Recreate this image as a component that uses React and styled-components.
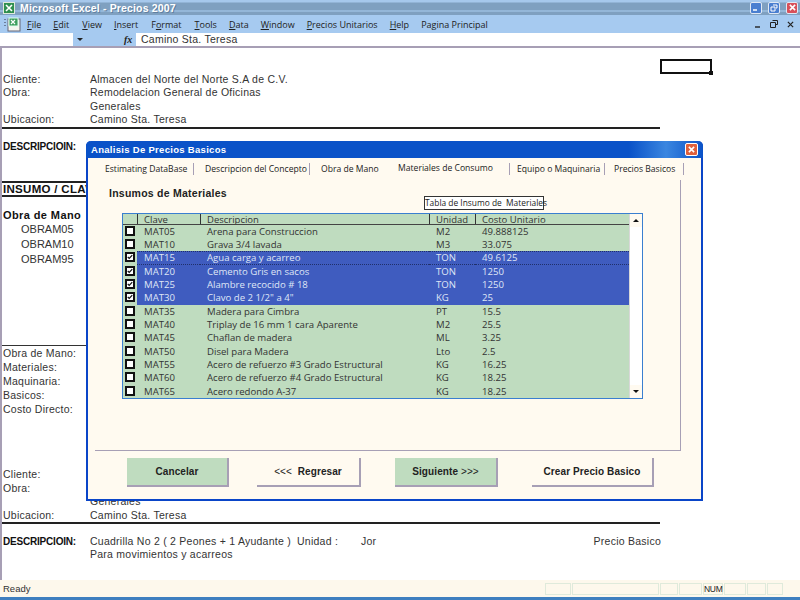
import React from "react";
import styled, { createGlobalStyle } from "styled-components";

const Global = createGlobalStyle`
  html, body { margin: 0; padding: 0; background: #fff; }
  #root { width: 800px; height: 600px; overflow: hidden; }
`;
const Screen = styled.div`
  position: relative; width: 800px; height: 600px; display: flex; flex-direction: column;
  font-family: "Liberation Sans", Arial, sans-serif; font-size: 10.5px; color: #333; overflow: hidden;
`;
const TitleBar = styled.div`
  height: 15px; display: flex; align-items: center; padding: 0 2px 0 3px; gap: 5px;
  background: linear-gradient(#a6c8ec 0, #a6c8ec 2px, #7fa0c0 3px, #7fa0c0 10px, #a9cdf0 11px, #7fa0c0 12px);
`;
const TitleText = styled.div`
  flex: 1; font-weight: 700; font-size: 10.5px; color: #fff; letter-spacing: 0.15px; text-shadow: 1px 1px 0 #5f7f9f;
`;
const WinBtn = styled.div`
  width: 12px; height: 12px; border-radius: 2px; border: 1px solid #dfe8f4; box-sizing: border-box; margin-left: 1px;
  background: ${p => (p.$red ? "#d8505a" : "#4a7fd0")}; display: flex; align-items: center; justify-content: center;
`;
const MenuBar = styled.div`
  height: 18px; background: #a6caf0; display: flex; align-items: center; padding: 0 6px 0 4px; color: #222; font-family: "Open Sans", sans-serif; font-size: 9px;
`;
const MenuItem = styled.span`
  margin-left: ${p => p.$ml}px; white-space: nowrap; u { text-decoration: underline; }
`;
const MenuRight = styled.div`
  margin-left: auto; display: flex; gap: 9px; align-items: center; color: #222;
`;
const FormulaBar = styled.div`
  height: 13px; background: #a6caf0; display: flex; align-items: center;
`;
const NameBox = styled.div` width: 73px; height: 13px; background: #fff; `;
const Arrow = styled.div`
  width: 0; height: 0; margin-left: 4px; border-left: 3px solid transparent; border-right: 3px solid transparent; border-top: 3px solid #222;
`;
const Fx = styled.span`
  margin-left: 41px; width: 10px; font: italic 700 10px "Liberation Serif", serif; color: #222;
`;
const FormulaInput = styled.div`
  flex: 1; height: 13px; margin-left: 2px; padding-left: 5px; background: #fff; line-height: 13px; font-size: 10.5px; letter-spacing: 0.25px; color: #333;
`;
const Sheet = styled.div`
  flex: 1; position: relative; border-top: 2px solid #a79fb5; border-left: 2px solid #a79fb5; background: #fff; overflow: hidden; letter-spacing: 0.25px;
`;
const Section = styled.div` margin-top: ${p => p.$mt || 0}px; `;
const Row = styled.div`
  height: ${p => p.$h || 13.4}px; line-height: ${p => p.$h || 13.4}px; display: grid;
  grid-template-columns: ${p => p.$cols || "87px 1fr"}; width: 658px; padding-left: 1px; white-space: nowrap;
`;
const Bold = styled.span`
  font-weight: 700; color: #111; font-size: ${p => p.$size || 10}px; letter-spacing: ${p => p.$ls ?? -0.2}px;
`;
const Rule = styled.div` height: 2px; width: ${p => p.$w || 658}px; background: #222; `;
const Indented = styled.div` padding-left: 19px; height: 14.8px; line-height: 14.8px; font-size: 11px; letter-spacing: 0; `;
const Right = styled.span` text-align: right; `;
const ThinRule = styled.div` height: 1px; width: 84px; background: #333; `;
const Marker = styled.div`
  position: absolute; left: 658px; top: 11px; width: 52px; height: 15px; box-sizing: border-box; border: 2px solid #111;
  &::after { content: ""; position: absolute; right: -3px; bottom: -3px; width: 4px; height: 4px; background: #111; }
`;
const StatusBar = styled.div`
  height: 17px; background: #fdf8ec; display: flex; align-items: center; padding-left: 3px; font-size: 9.5px; color: #333;
`;
const StatusLabel = styled.span` flex: 1; `;
const StatusCell = styled.div`
  width: ${p => p.$w}px; height: 12px; margin-right: 1px; box-sizing: border-box; border: 1px solid #dfeadb; font-size: 8.5px; line-height: 11px; text-align: center; color: #222; letter-spacing: -0.3px;
`;
const StatusEnd = styled.div` width: 16px; `;
const Taskbar = styled.div` height: 3px; background: #3f7fbf; `;

const Dialog = styled.div`
  position: absolute; left: 86px; top: 141px; width: 617px; height: 360px; box-sizing: border-box;
  border: 2px solid #0a45c8; border-top: 0; border-radius: 5px 5px 0 0; background: #fffaf0; display: flex; flex-direction: column;
  font-family: "Open Sans", sans-serif; font-size: 8.6px; color: #222;
`;
const DialogTitle = styled.div`
  height: 17px; margin: 0 -2px; padding: 0 5px 0 5px; border-radius: 5px 5px 0 0; display: flex; align-items: center; justify-content: space-between;
  background: linear-gradient(90deg, #0a52c8 0, #0a52c8 88%, #3a86e0 94%, #0a52c8 100%);
  color: #fff; font-family: "Liberation Sans", sans-serif; font-weight: 700; font-size: 9.5px; letter-spacing: 0.3px;
`;
const DialogClose = styled.div`
  width: 11px; height: 11px; border-radius: 2px; background: #e0603c; border: 1px solid #fff; display: flex; align-items: center; justify-content: center;
`;
const Tabs = styled.div`
  height: 22px; display: flex; align-items: center; padding-left: 17px; 
`;
const Tab = styled.span`
  width: ${p => p.$w}px; white-space: nowrap; position: relative; top: ${p => (p.$active ? -1 : 0)}px;
`;
const TabSep = styled.span` width: 1px; height: 12px; background: #a79fb5; margin-right: ${p => p.$mr}px; `;
const TabPage = styled.div`
  position: relative; flex: 1; margin: 0 20px 0 7px; padding: 6px 0 0 14px; border-right: 1px solid #a79fb5; border-bottom: 1px solid #a79fb5; display: flex; flex-direction: column;
`;
const PageHead = styled.div`
  font-family: "Liberation Sans", sans-serif; font-weight: 700; font-size: 10.5px; color: #222; letter-spacing: 0.25px; height: 14px; line-height: 14px;
`;
const Tooltip = styled.div`
  position: absolute; left: 329px; top: 16px; width: 120px; height: 14px; box-sizing: border-box; border: 1px solid #333; background: #fff; line-height: 12px; text-align: center; white-space: pre; font-size: 8.4px; color: #222;
`;
const List = styled.div`
  width: 521px; height: 186px; margin: 13px 0 0 13px; box-sizing: border-box; border: 1px solid #3a7fd0; background: #bfdcbf; display: flex;
`;
const ListBody = styled.div` flex: 1; display: flex; flex-direction: column; min-width: 0; `;
const Grid = "14px 63px 229px 46px 1fr";
const HeadRow = styled.div`
  height: 11px; display: grid; grid-template-columns: ${Grid}; border-bottom: 1px solid #444; line-height: 11px; font-size: 9.5px; color: #333; overflow: hidden;
`;
const HeadCell = styled.span`
  padding-left: 6px; border-left: ${p => (p.$first ? "0" : "1px solid #333")}; text-decoration: underline; text-decoration-color: #333;
`;
const DataRow = styled.div`
  height: 13.35px; line-height: 13.35px; display: grid; grid-template-columns: ${Grid}; font-size: 9.6px;
  color: ${p => (p.$on ? "#dfe6f6" : "#333")};
`;
const Check = styled.span`
  width: 10px; height: 10px; margin: 1px 0 0 2px; box-sizing: border-box; border: 2px solid #111; background: #fff; display: flex; align-items: center; justify-content: center;
`;
const Cell = styled.span`
  padding-left: 7px; white-space: nowrap; overflow: hidden; background: ${p => (p.$on ? "#3f5cbf" : "transparent")};
  ${p => p.$dotted && "border-top: 1px dotted #20306a; border-bottom: 1px dotted #20306a; line-height: 11.35px;"}
`;
const ScrollTrack = styled.div`
  width: 13px; background: #fff; display: flex; flex-direction: column; justify-content: space-between; border-left: 1px solid #d8d8d8; box-sizing: border-box;
`;
const ScrollBtn = styled.div`
  height: 13px; display: flex; align-items: center; justify-content: center; background: #fffaf0;
  &::after { content: ""; border-left: 3px solid transparent; border-right: 3px solid transparent; ${p => (p.$up ? "border-bottom" : "border-top")}: 3px solid #111; }
`;
const Footer = styled.div`
  height: 48px; margin-left: 0; display: flex; align-items: center; flex-shrink: 0; padding-left: 39px; padding-bottom: 6px; box-sizing: border-box;
`;
const Button = styled.div`
  width: ${p => p.$w}px; height: 29px; margin-right: ${p => p.$mr}px; box-sizing: border-box; display: flex; align-items: center; justify-content: center;
  background: ${p => (p.$green ? "#bfdcbf" : "#fffaf0")}; border-right: 2px solid #a79fb5; border-bottom: 2px solid #a79fb5;
  font-family: "Liberation Sans", sans-serif; font-weight: 700; font-size: 10px; color: #222; white-space: pre; letter-spacing: 0.1px;
`;
const Light = styled.span` font-weight: 400; `;

const rows = [
  ["MAT05", "Arena para Construccion", "M2", "49.888125", 0],
  ["MAT10", "Grava 3/4 lavada", "M3", "33.075", 0],
  ["MAT15", "Agua carga y acarreo", "TON", "49.6125", 1],
  ["MAT20", "Cemento Gris en sacos", "TON", "1250", 1],
  ["MAT25", "Alambre recocido # 18", "TON", "1250", 1],
  ["MAT30", "Clavo de 2 1/2\" a 4\"", "KG", "25", 1],
  ["MAT35", "Madera para Cimbra", "PT", "15.5", 0],
  ["MAT40", "Triplay de 16 mm 1 cara Aparente", "M2", "25.5", 0],
  ["MAT45", "Chaflan de madera", "ML", "3.25", 0],
  ["MAT50", "Disel para Madera", "Lto", "2.5", 0],
  ["MAT55", "Acero de refuerzo #3 Grado Estructural", "KG", "16.25", 0],
  ["MAT60", "Acero de refuerzo #4 Grado Estructural", "KG", "18.25", 0],
  ["MAT65", "Acero redondo A-37", "KG", "18.25", 0],
];

const menus = [
  [<><u>F</u>ile</>, 11], [<><u>E</u>dit</>, 12], [<><u>V</u>iew</>, 13], [<><u>I</u>nsert</>, 12], [<>F<u>o</u>rmat</>, 13],
  [<><u>T</u>ools</>, 13], [<><u>D</u>ata</>, 12], [<><u>W</u>indow</>, 12], [<><u>P</u>recios Unitarios</>, 12], [<><u>H</u>elp</>, 12], [<>Pagina Principal</>, 12],
];

const XMark = ({ s = 7, c = "#fff", w = 1.8 }) => (
  <svg width={s} height={s} viewBox="0 0 8 8"><path d="M1 1 L7 7 M7 1 L1 7" stroke={c} strokeWidth={w} fill="none" /></svg>
);

const ExcelLogo = () => (
  <svg width="12" height="12" viewBox="0 0 12 12">
    <rect x="0.5" y="0.5" width="11" height="11" fill="#2f8f4f" stroke="#dfeadb" />
    <path d="M3 3 L9 9 M9 3 L3 9" stroke="#fff" strokeWidth="1.6" />
  </svg>
);
const SheetIcon = () => (
  <svg width="18" height="15" viewBox="0 0 18 15">
    <path d="M1 2v1M1 5v1M1 8v1" stroke="#334" strokeWidth="1" />
    <rect x="4" y="2" width="12" height="12" fill="#f6f6f0" stroke="#667" />
    <rect x="5" y="1" width="9" height="8" fill="#3f9f5f" stroke="#dfe" />
    <path d="M7 3l4 4M11 3l-4 4" stroke="#fff" strokeWidth="1.2" />
  </svg>
);
const CheckMark = () => (
  <svg width="8" height="8" viewBox="0 0 8 8"><path d="M1 4 L3 6 L7 1.5" stroke="#111" strokeWidth="1.6" fill="none" /></svg>
);

export default function App() {
  return (
    <Screen>
      <Global />
      <TitleBar>
        <ExcelLogo />
        <TitleText>Microsoft Excel - Precios 2007</TitleText>
        <WinBtn><svg width="6" height="6" viewBox="0 0 6 6"><path d="M0 5h4" stroke="#fff" strokeWidth="1.5" /></svg></WinBtn>
        <WinBtn><svg width="8" height="8" viewBox="0 0 8 8"><path d="M3 1h4v3H6M1 3h4v4H1z" stroke="#fff" fill="none" /></svg></WinBtn>
        <WinBtn $red><XMark /></WinBtn>
      </TitleBar>
      <MenuBar>
        <SheetIcon />
        {menus.map(([m, ml], i) => <MenuItem key={i} $ml={i === 0 ? 5 : ml}>{m}</MenuItem>)}
        <MenuRight>
          <svg width="6" height="8" viewBox="0 0 6 8"><path d="M0 7h5" stroke="#222" strokeWidth="1.4" /></svg>
          <svg width="8" height="8" viewBox="0 0 8 8"><path d="M2.5 .5h5v4H6M.5 2.5h5v5h-5z" stroke="#222" fill="none" /></svg>
          <XMark s={7} c="#222" w={1.4} />
        </MenuRight>
      </MenuBar>
      <FormulaBar>
        <NameBox />
        <Arrow />
        <Fx>fx</Fx>
        <FormulaInput>Camino Sta. Teresa</FormulaInput>
      </FormulaBar>
      <Sheet>
        <Marker />
        <Section $mt={25}>
          <Row><span>Cliente:</span><span>Almacen del Norte del Norte S.A de C.V.</span></Row>
          <Row><span>Obra:</span><span>Remodelacion General de Oficinas</span></Row>
          <Row><span /><span>Generales</span></Row>
          <Row><span>Ubicacion:</span><span>Camino Sta. Teresa</span></Row>
        </Section>
        <Rule />
        <Section $mt={11}><Row><Bold>DESCRIPCIOIN:</Bold></Row></Section>
        <Section $mt={28}>
          <Rule $w={90} />
          <Row $h={12}><Bold $size={11.5} $ls={0.3}>INSUMO / CLAVE</Bold></Row>
          <Rule $w={90} />
        </Section>
        <Section $mt={11}>
          <Row $h={14}><Bold $size={11} $ls={0.4}>Obra de Mano</Bold></Row>
          <Indented>OBRAM05</Indented>
          <Indented>OBRAM10</Indented>
          <Indented>OBRAM95</Indented>
        </Section>
        <Section $mt={79}>
          <ThinRule />
          <Row $h={14}><span>Obra de Mano:</span></Row>
          <Row $h={14}><span>Materiales:</span></Row>
          <Row $h={14}><span>Maquinaria:</span></Row>
          <Row $h={14}><span>Basicos:</span></Row>
          <Row $h={14}><span>Costo Directo:</span></Row>
        </Section>
        <Section $mt={52}>
          <Row><span>Cliente:</span><span>Almacen del Norte del Norte S.A de C.V.</span></Row>
          <Row><span>Obra:</span><span>Remodelacion General de Oficinas</span></Row>
          <Row><span /><span>Generales</span></Row>
          <Row><span>Ubicacion:</span><span>Camino Sta. Teresa</span></Row>
        </Section>
        <Rule />
        <Section $mt={11}>
          <Row $cols="87px 207px 64px 1fr">
            <Bold>DESCRIPCIOIN:</Bold>
            <span>Cuadrilla No 2 ( 2 Peones + 1 Ayudante )</span>
            <span>Unidad :</span>
            <Grid2><span>Jor</span><Right>Precio Basico</Right></Grid2>
          </Row>
          <Row><span /><span>Para movimientos y acarreos</span></Row>
        </Section>
      </Sheet>
      <StatusBar>
        <StatusLabel>Ready</StatusLabel>
        <StatusCell $w={26} /><StatusCell $w={87} /><StatusCell $w={18} /><StatusCell $w={23} />
        <StatusCell $w={20}>NUM</StatusCell>
        <StatusCell $w={22} /><StatusCell $w={19} /><StatusCell $w={16} />
        <StatusEnd />
      </StatusBar>
      <Taskbar />
      <Dialog>
        <DialogTitle>Analisis De Precios Basicos<DialogClose><XMark s={7} /></DialogClose></DialogTitle>
        <Tabs>
          <Tab $w={88}>Estimating DataBase</Tab><TabSep $mr={11} />
          <Tab $w={104}>Descripcion del Concepto</Tab><TabSep $mr={11} />
          <Tab $w={77}>Obra de Mano</Tab>
          <Tab $active $w={111}>Materiales de Consumo</Tab><TabSep $mr={7} />
          <Tab $w={87}>Equipo o Maquinaria</Tab><TabSep $mr={9} />
          <Tab $w={69}>Precios Basicos</Tab><TabSep $mr={0} />
        </Tabs>
        <TabPage>
          <PageHead>Insumos de Materiales</PageHead>
          <Tooltip>Tabla de Insumo de  Materiales</Tooltip>
          <List>
            <ListBody>
              <HeadRow>
                <HeadCell $first />
                <HeadCell>Clave</HeadCell>
                <HeadCell>Descripcion</HeadCell>
                <HeadCell>Unidad</HeadCell>
                <HeadCell>Costo Unitario</HeadCell>
              </HeadRow>
              {rows.map(([a, b, c, d, on], i) => (
                <DataRow key={a} $on={on}>
                  <Check>{on ? <CheckMark /> : null}</Check>
                  <Cell $on={on} $dotted={a === "MAT15"}>{a}</Cell>
                  <Cell $on={on} $dotted={a === "MAT15"}>{b}</Cell>
                  <Cell $on={on} $dotted={a === "MAT15"}>{c}</Cell>
                  <Cell $on={on} $dotted={a === "MAT15"}>{d}</Cell>
                </DataRow>
              ))}
            </ListBody>
            <ScrollTrack><ScrollBtn $up /><ScrollBtn /></ScrollTrack>
          </List>
        </TabPage>
        <Footer>
          <Button $green $w={102} $mr={28}>Cancelar</Button>
          <Button $w={104} $mr={34}><span><Light>{"<<<  "}</Light>Regresar</span></Button>
          <Button $green $w={103} $mr={34}><span>Siguiente <Light>{">>>"}</Light></span></Button>
          <Button $w={122} $mr={0}>Crear Precio Basico</Button>
        </Footer>
      </Dialog>
    </Screen>
  );
}

const Grid2 = styled.span`
  display: flex; justify-content: space-between;
`;
